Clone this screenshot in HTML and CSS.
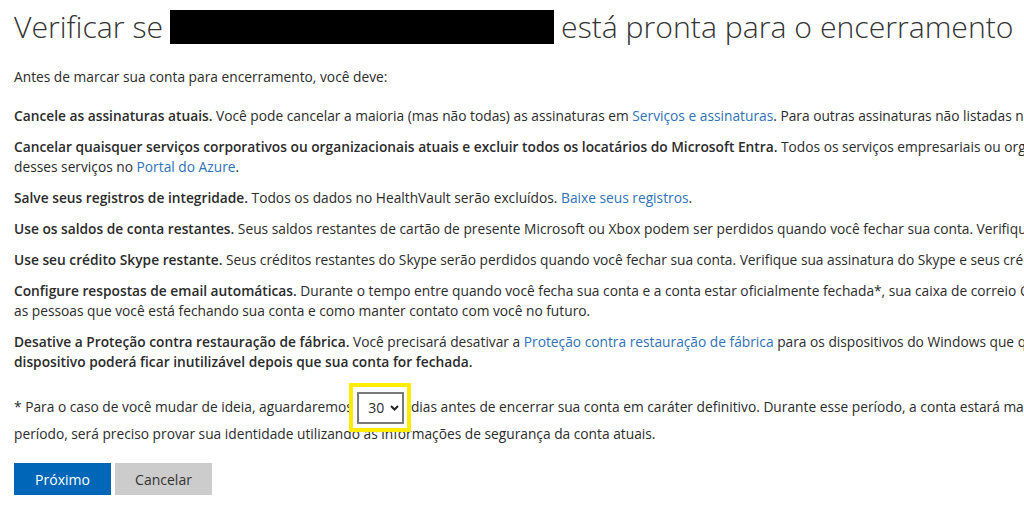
FILE: index.html
```html
<!DOCTYPE html>
<html lang="pt-BR">
<head>
<meta charset="utf-8">
<title>Verificar se a conta está pronta para o encerramento</title>
<link rel="stylesheet" href="styles.css">
</head>
<body>
<main class="page">
  <h1 class="title">Verificar se <span class="redact"></span> está pronta para o encerramento</h1>
  <p class="intro">Antes de marcar sua conta para encerramento, você deve:</p>
  <p><b>Cancele as assinaturas atuais.</b> Você pode cancelar a maioria (mas não todas) as assinaturas em <a href="#">Serviços e assinaturas</a>. Para outras assinaturas não listadas nesta página, consulte as instruções de cancelamento do serviço.</p>
  <p><b>Cancelar quaisquer serviços corporativos ou organizacionais atuais e excluir todos os locatários do Microsoft Entra.</b> Todos os serviços empresariais ou organizacionais serão encerrados. Cancele<br>desses serviços no <a href="#">Portal do Azure</a>.</p>
  <p><b>Salve seus registros de integridade.</b> Todos os dados no HealthVault serão excluídos. <a href="#">Baixe seus registros</a>.</p>
  <p><b>Use os saldos de conta restantes.</b> Seus saldos restantes de cartão de presente Microsoft ou Xbox podem ser perdidos quando você fechar sua conta. Verifique seu saldo da conta Microsoft.</p>
  <p><b>Use seu crédito Skype restante.</b> Seus créditos restantes do Skype serão perdidos quando você fechar sua conta. Verifique sua assinatura do Skype e seus créditos.</p>
  <p><b>Configure respostas de email automáticas.</b> Durante o tempo entre quando você fecha sua conta e a conta estar oficialmente fechada*, sua caixa de correio Outlook.com poderá enviar respostas informando<br>as pessoas que você está fechando sua conta e como manter contato com você no futuro.</p>
  <p><b>Desative a Proteção contra restauração de fábrica.</b> Você precisará desativar a <a href="#">Proteção contra restauração de fábrica</a> para os dispositivos do Windows que quiser vender ou doar. <b>Caso contrário, o<br>dispositivo poderá ficar inutilizável depois que sua conta for fechada.</b></p>
  <p class="note">* Para o caso de você mudar de ideia, aguardaremos <span class="pick-wrap"><span class="pick" role="combobox" aria-label="Dias">30 <svg class="chev" width="9" height="6" viewBox="0 0 9 6" aria-hidden="true"><path d="M1 1l3.5 3.5L8 1" fill="none" stroke="#222" stroke-width="2"/></svg></span><span class="mark"></span></span> dias antes de encerrar sua conta em caráter definitivo. Durante esse período, a conta estará marcada para encerramento. Para reabrir a conta durante esse<br>período, será preciso provar sua identidade utilizando as informações de segurança da conta atuais.</p>
  <div class="actions">
    <button class="btn btn-primary" type="button">Próximo</button>
    <button class="btn btn-secondary" type="button">Cancelar</button>
  </div>
</main>
</body>
</html>
```

FILE: styles.css
```css
html, body {
  margin: 0;
  padding: 0;
  background: #fff;
  overflow: hidden;
}
body {
  font-family: "Open Sans", "Noto Sans", sans-serif;
  font-size: 13.75px;
  color: #2b2b2b;
}
.page {
  width: 2000px;
  padding: 8px 14px 0;
}
.title {
  font-weight: 300;
  font-size: 30.2px;
  line-height: 38px;
  margin: 0 0 21px;
  color: #333;
  display: flex;
  align-items: center;
  gap: 7px;
}
.redact {
  display: inline-block;
  width: 384px;
  height: 34px;
  background: #000;
}
p {
  margin: 0 0 11px;
  line-height: 20px;
  white-space: nowrap;
}
.intro {
  margin-bottom: 19px;
}
b {
  font-weight: 600;
}
a {
  color: #2f72b8;
  text-decoration: none;
}
.note {
  margin-top: 22px;
  line-height: 26px;
}
.pick-wrap {
  position: relative;
  display: inline-block;
  vertical-align: middle;
  margin: -3px 3px -3px 1px;
}
.pick {
  display: flex;
  align-items: center;
  gap: 6px;
  box-sizing: border-box;
  width: 47px;
  height: 32px;
  padding: 0 0 0 9px;
  border: 2px solid #7a7a7a;
  background: #fff;
  font-size: 14px;
}
.mark {
  position: absolute;
  left: -8px;
  top: -9px;
  right: -7px;
  bottom: -8px;
  border: 4px solid #ffec00;
}
.actions {
  display: flex;
  gap: 4px;
  margin-top: 16px;
}
.btn {
  width: 97px;
  height: 32px;
  border: 0;
  font-family: inherit;
  font-size: 14px;
  padding: 0;
}
.btn-primary {
  background: #0067b8;
  color: #fff;
}
.btn-secondary {
  background: #cccccc;
  color: #333;
}
```
